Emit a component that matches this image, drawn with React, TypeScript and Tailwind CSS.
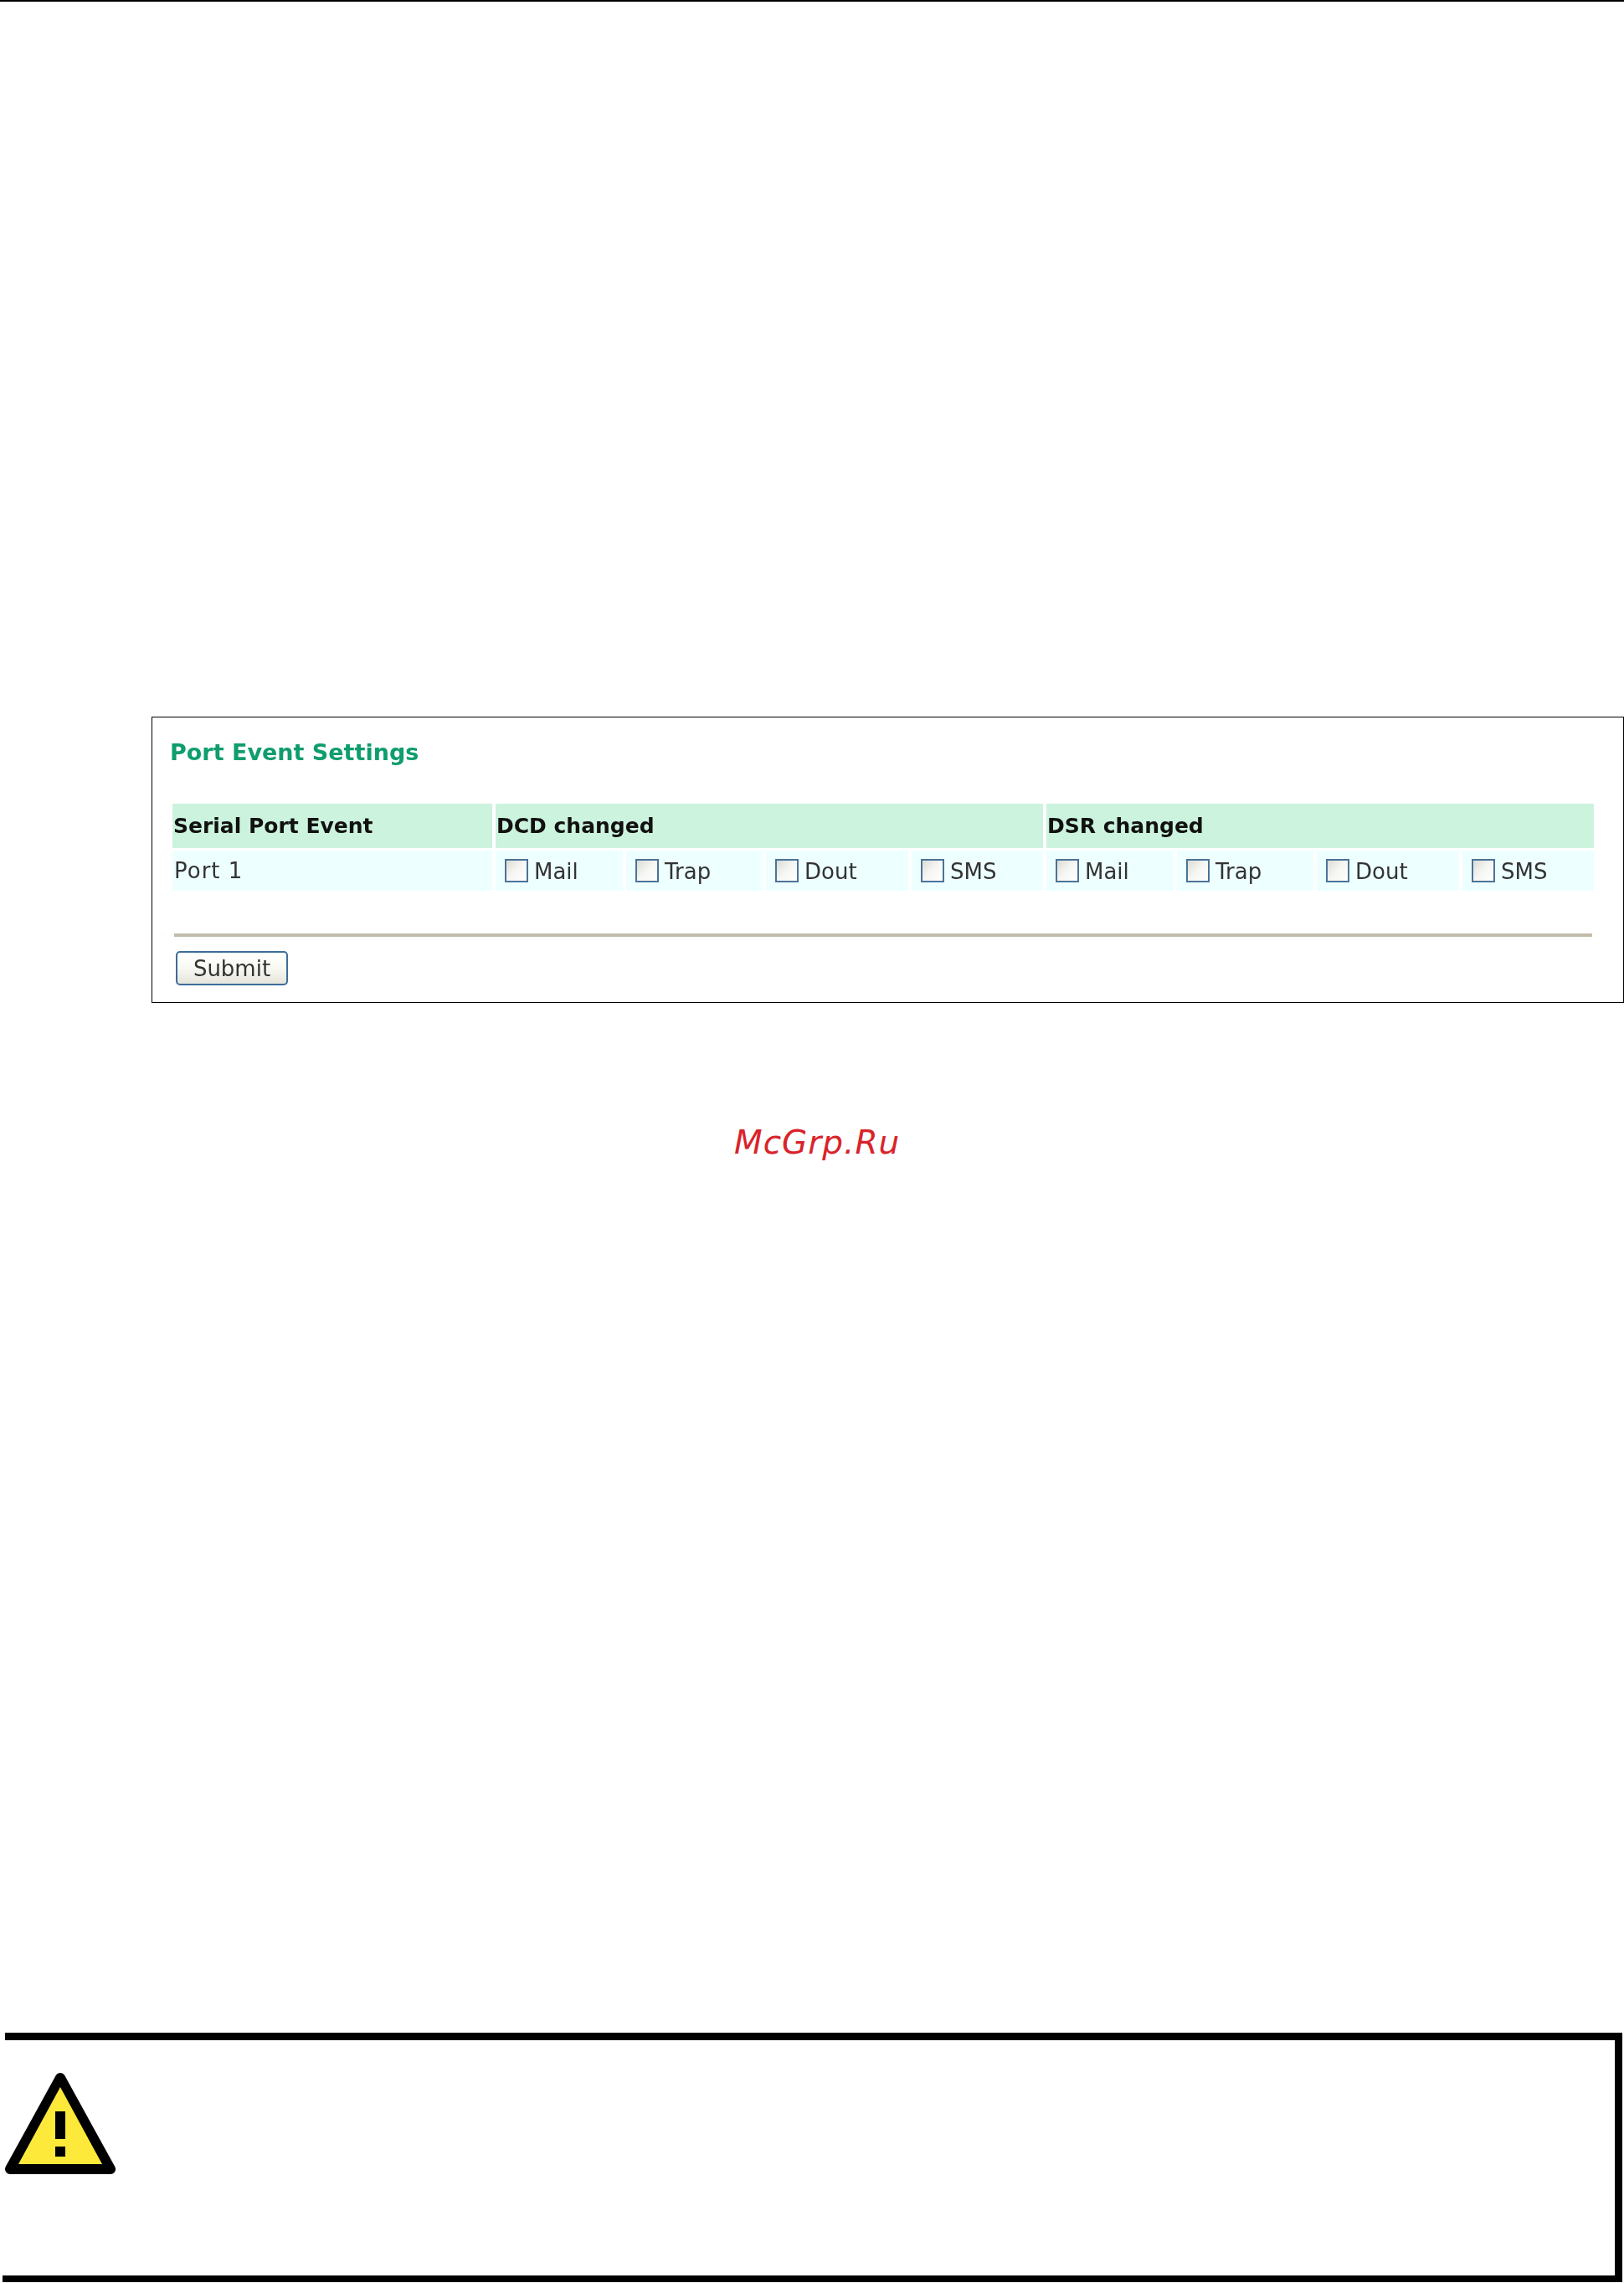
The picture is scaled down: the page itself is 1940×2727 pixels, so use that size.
const font = "font-['DejaVu_Sans','Liberation_Sans',sans-serif]";

function Check({ label }: { label: string }) {
  return (
    <label className="flex h-[48px] items-center bg-[#eeffff] pl-[11px] text-[26px] leading-none text-[#333]">
      <input
        type="checkbox"
        className="mr-[7px] h-[28px] w-[28px] shrink-0 appearance-none border-[2px] border-[#4a7499] bg-gradient-to-br from-[#dcdcd6] via-[#f6f6f3] to-[#ffffff]"
      />
      <span className="relative top-[1px]">{label}</span>
    </label>
  );
}

const opts = ["Mail", "Trap", "Dout", "SMS"];

export default function App() {
  return (
    <div className={`flex h-[2727px] w-[1940px] flex-col overflow-hidden bg-white ${font}`}>
      <div className="h-[2px] w-full bg-black" />

      <section className="ml-[181px] mt-[854px] flex h-[342px] w-[1759px] flex-col border border-black pl-[24px]">
        <div className="blur-[0.5px]">
          <h2 className="ml-[-3px] mt-[26px] text-[27px] font-bold leading-[32px] text-[#0f9d6e]">Port Event Settings</h2>
          <div className="mt-[45px] grid w-[1698px] grid-cols-[382px_152px_163px_170px_157px_152px_163px_170px_157px] gap-x-[4px] gap-y-[3px]">
            <div className="flex h-[53px] items-center bg-[#ccf3dd] pl-[1px] text-[25px] font-bold text-[#111]">Serial Port Event</div>
            <div className="col-span-4 flex items-center bg-[#ccf3dd] pl-[1px] text-[25px] font-bold text-[#111]">DCD changed</div>
            <div className="col-span-4 flex items-center bg-[#ccf3dd] pl-[1px] text-[25px] font-bold text-[#111]">DSR changed</div>
            <div className="flex h-[48px] items-center bg-[#eeffff] pl-[2px] text-[26px] tracking-[1px] text-[#333]">Port 1</div>
            {opts.map((o) => <Check key={`a${o}`} label={o} />)}
            {opts.map((o) => <Check key={`b${o}`} label={o} />)}
          </div>
          <div className="mb-[17px] ml-[2px] mt-[51px] h-[4px] w-[1694px] bg-[#c2bdab]" />
          <button className="ml-[4px] block h-[41px] w-[134px] rounded-[5px] border-[2px] border-[#3c6d99] bg-gradient-to-b from-[#ffffff] via-[#f8f8f3] to-[#e6e5dc] text-[26px] leading-none text-[#333]">
            Submit
          </button>
        </div>
      </section>

      <div className="mt-[144px] ml-[877px] text-[39px] italic leading-[46px] tracking-[1px] text-[#d9232a]">McGrp.Ru</div>

      <section className="ml-[3px] mt-[1040px] flex h-[298px] w-[1935px] flex-col border-b-[8px] border-r-[9px] border-black">
        <div className="ml-[3px] h-[9px] bg-black" />
        <svg className="ml-[3px] mt-[37px] block" width="132" height="124" viewBox="0 0 132 124">
          <path d="M66 8 L126 117 L6 117 Z" fill="#000" stroke="#000" strokeWidth="12" strokeLinejoin="round" />
          <path d="M66 19 L116 111 L16 111 Z" fill="#fde93a" />
          <rect x="60" y="48" width="12" height="33" fill="#000" />
          <rect x="60" y="90" width="12" height="12" fill="#000" />
        </svg>
      </section>
    </div>
  );
}
